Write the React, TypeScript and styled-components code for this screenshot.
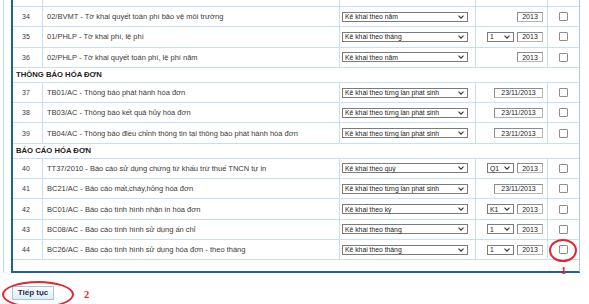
import styled, { createGlobalStyle } from "styled-components";

type Period =
  | { kind: "year" }
  | { kind: "sub"; value: string }
  | { kind: "date" };

type Item =
  | { type: "row"; no: number; name: string; mode: string; period: Period; marked?: boolean }
  | { type: "group"; title: string };

const LINE = "#c9def2";
const DARK = "#20609a";
const RED = "#e3262b";

const items: Item[] = [
  { type: "row", no: 34, name: "02/BVMT - Tờ khai quyết toán phí bảo vệ môi trường", mode: "Kê khai theo năm", period: { kind: "year" } },
  { type: "row", no: 35, name: "01/PHLP - Tờ khai phí, lệ phí", mode: "Kê khai theo tháng", period: { kind: "sub", value: "1" } },
  { type: "row", no: 36, name: "02/PHLP - Tờ khai quyết toán phí, lệ phí năm", mode: "Kê khai theo năm", period: { kind: "year" } },
  { type: "group", title: "THÔNG BÁO HÓA ĐƠN" },
  { type: "row", no: 37, name: "TB01/AC - Thông báo phát hành hóa đơn", mode: "Kê khai theo từng lần phát sinh", period: { kind: "date" } },
  { type: "row", no: 38, name: "TB03/AC - Thông báo kết quả hủy hóa đơn", mode: "Kê khai theo từng lần phát sinh", period: { kind: "date" } },
  { type: "row", no: 39, name: "TB04/AC - Thông báo điều chỉnh thông tin tại thông báo phát hành hóa đơn", mode: "Kê khai theo từng lần phát sinh", period: { kind: "date" } },
  { type: "group", title: "BÁO CÁO HÓA ĐƠN" },
  { type: "row", no: 40, name: "TT37/2010 - Báo cáo sử dụng chứng từ khấu trừ thuế TNCN tự in", mode: "Kê khai theo quý", period: { kind: "sub", value: "Q1" } },
  { type: "row", no: 41, name: "BC21/AC - Báo cáo mất,cháy,hỏng hóa đơn", mode: "Kê khai theo từng lần phát sinh", period: { kind: "date" } },
  { type: "row", no: 42, name: "BC01/AC - Báo cáo tình hình nhận in hóa đơn", mode: "Kê khai theo kỳ", period: { kind: "sub", value: "K1" } },
  { type: "row", no: 43, name: "BC08/AC - Báo cáo tình hình sử dụng ấn chỉ", mode: "Kê khai theo tháng", period: { kind: "sub", value: "1" } },
  { type: "row", no: 44, name: "BC26/AC - Báo cáo tình hình sử dụng hóa đơn - theo tháng", mode: "Kê khai theo tháng", period: { kind: "sub", value: "1" }, marked: true },
];

const GlobalStyle = createGlobalStyle`
  body {
    margin: 0;
    background: #fff;
    font-family: "Liberation Sans", Arial, sans-serif;
    color: #3a3a3a;
  }
`;

const Page = styled.div`
  width: 589px;
  height: 304px;
  overflow: hidden;
  padding-left: 3px;
  box-sizing: border-box;
`;

const Frame = styled.div`
  border-left: 1px solid #bcd8f0;
  padding-left: 7px;
`;

const Box = styled.div`
  width: 569px;
  box-sizing: border-box;
  border-left: 2px solid ${DARK};
  border-right: 1px solid #a6cbeb;
  border-bottom: 2px solid ${DARK};
  padding-bottom: 11px;
`;

const Row = styled.div<{ $h?: number }>`
  display: grid;
  grid-template-columns: 30px 297px 136px 72px 31px;
  height: ${(p) => p.$h ?? 20.3}px;
  box-sizing: border-box;
  border-bottom: 1px solid ${LINE};
`;

const Cell = styled.div<{ $last?: boolean }>`
  display: flex;
  align-items: center;
  border-right: ${(p) => (p.$last ? "none" : `1px solid ${LINE}`)};
  min-width: 0;
  white-space: nowrap;
  font-size: 7.5px;
`;

const NoCell = styled(Cell)`
  justify-content: center;
  padding-right: 3px;
  font-size: 7px;
`;

const NameCell = styled(Cell)`
  padding-left: 4px;
`;

const PeriodCell = styled(Cell)`
  justify-content: flex-end;
  gap: 3px;
  padding-right: 4px;
`;

const CheckCell = styled(Cell)`
  justify-content: center;
  position: relative;
`;

const GroupRow = styled.div`
  height: 15px;
  box-sizing: border-box;
  border-bottom: 1px solid ${LINE};
  display: flex;
  align-items: center;
  padding-left: 3px;
  font-size: 7.7px;
  font-weight: bold;
  color: #222;
`;

const SelectBox = styled.div<{ $w: number }>`
  width: ${(p) => p.$w}px;
  height: 10px;
  box-sizing: border-box;
  border: 1px solid #7b7b7b;
  background: #fff;
  display: flex;
  align-items: center;
  justify-content: space-between;
  padding: 0 3px 0 2px;
  font-size: 6.8px;
  color: #222;
`;

const ModeSelect = styled(SelectBox)`
  margin-left: 2px;
`;

const TextBox = styled.div<{ $w: number }>`
  width: ${(p) => p.$w}px;
  height: 10px;
  box-sizing: border-box;
  border: 1px solid #b4b4b4;
  border-top-color: #8c8c8c;
  border-left-color: #8c8c8c;
  background: #fff;
  display: flex;
  align-items: center;
  justify-content: center;
  font-size: 7px;
  color: #222;
`;

const Check = styled.input`
  appearance: none;
  margin: 0;
  width: 9px;
  height: 9px;
  box-sizing: border-box;
  border: 1px solid #8e8e8e;
  border-radius: 1px;
  background: #fff;
`;

const Ring = styled.div<{ $w: number; $h: number }>`
  position: absolute;
  width: ${(p) => p.$w}px;
  height: ${(p) => p.$h}px;
  box-sizing: border-box;
  border: 2px solid ${RED};
  border-radius: 50%;
  pointer-events: none;
`;

const CheckRing = styled(Ring)`
  left: 1px;
  top: -1px;
`;

const Mark = styled.span`
  position: absolute;
  font-family: "Liberation Serif", "Times New Roman", serif;
  font-weight: bold;
  font-size: 10.5px;
  line-height: 1;
  color: ${RED};
`;

const CheckMark = styled(Mark)`
  left: 13px;
  top: 26px;
`;

const Footer = styled.div`
  padding: 8px 0 0 9px;
`;

const ButtonWrap = styled.div`
  position: relative;
  display: inline-block;
`;

const Button = styled.button`
  display: block;
  width: 42px;
  height: 14px;
  padding: 0;
  border: 1px solid #9fc4e6;
  background: linear-gradient(#ffffff, #e2ebf5);
  font-family: "Liberation Sans", Arial, sans-serif;
  font-size: 8px;
  font-weight: bold;
  color: #1b2d4f;
`;

const ButtonRing = styled(Ring)`
  left: -10px;
  top: -5px;
`;

const ButtonMark = styled(Mark)`
  left: 72px;
  top: 4px;
`;

const Chevron = () => (
  <svg width="6" height="4" viewBox="0 0 6 4">
    <polyline points="0.5,0.6 3,3.2 5.5,0.6" fill="none" stroke="#333" strokeWidth="1.1" />
  </svg>
);

const PeriodInputs = ({ period }: { period: Period }) => {
  if (period.kind === "date") return <TextBox $w={49}>23/11/2013</TextBox>;
  return (
    <>
      {period.kind === "sub" && (
        <SelectBox $w={27}>
          <span>{period.value}</span>
          <Chevron />
        </SelectBox>
      )}
      <TextBox $w={26}>2013</TextBox>
    </>
  );
};

export default function App() {
  return (
    <Page>
      <GlobalStyle />
      <Frame>
        <Box>
          {/* phần cuộn: dòng trước bị che một nửa */}
          <Row $h={7}>
            <Cell />
            <Cell />
            <Cell />
            <Cell />
            <Cell $last />
          </Row>

          {items.map((it, i) =>
            it.type === "group" ? (
              <GroupRow key={i}>{it.title}</GroupRow>
            ) : (
              <Row key={i}>
                <NoCell>{it.no}</NoCell>
                <NameCell>{it.name}</NameCell>
                <Cell>
                  <ModeSelect $w={126}>
                    <span>{it.mode}</span>
                    <Chevron />
                  </ModeSelect>
                </Cell>
                <PeriodCell>
                  <PeriodInputs period={it.period} />
                </PeriodCell>
                <CheckCell $last>
                  <Check type="checkbox" />
                  {it.marked && (
                    <>
                      <CheckRing $w={28} $h={23} />
                      <CheckMark>1</CheckMark>
                    </>
                  )}
                </CheckCell>
              </Row>
            )
          )}
        </Box>
      </Frame>

      <Footer>
        <ButtonWrap>
          <Button>Tiếp tục</Button>
          <ButtonRing $w={72} $h={27} />
          <ButtonMark>2</ButtonMark>
        </ButtonWrap>
      </Footer>
    </Page>
  );
}
